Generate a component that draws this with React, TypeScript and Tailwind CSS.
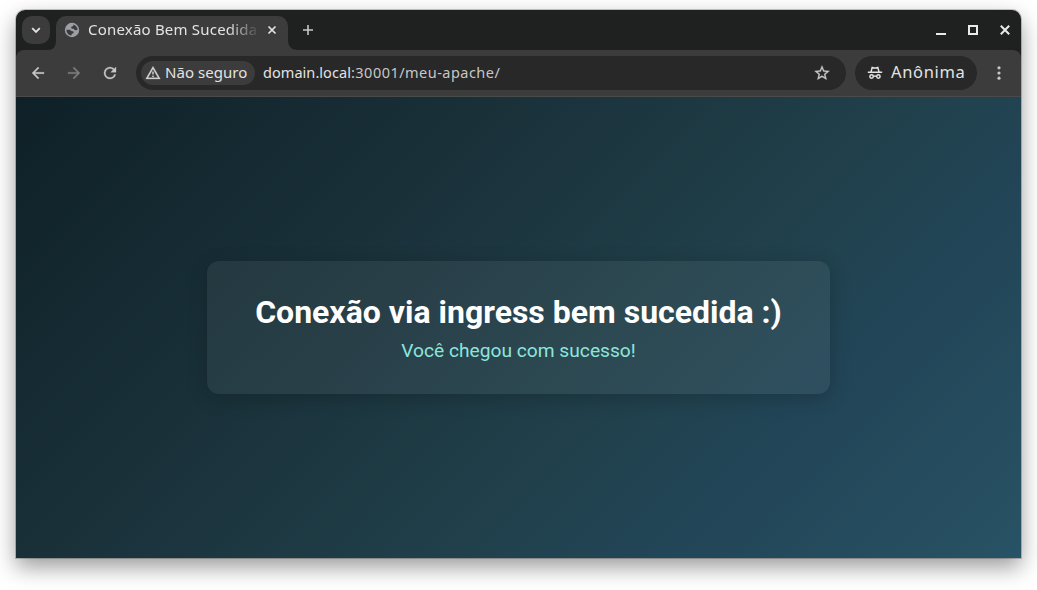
import type { ReactNode } from 'react';

const P = {
  back: 'M20 11H7.83l5.59-5.59L12 4l-8 8 8 8 1.41-1.41L7.83 13H20v-2z',
  forward: 'M12 4l-1.41 1.41L16.17 11H4v2h12.17l-5.58 5.59L12 20l8-8z',
  reload:
    'M17.65 6.35A7.96 7.96 0 0 0 12 4a8 8 0 1 0 7.73 10h-2.08A6 6 0 1 1 12 6c1.66 0 3.14.69 4.22 1.78L13 11h7V4l-2.35 2.35z',
  warning: 'M12 5.99 19.53 19H4.47L12 5.99M12 2 1 21h22L12 2zm1 14h-2v2h2v-2zm0-6h-2v4h2v-4z',
  star: 'M22 9.24l-7.19-.62L12 2 9.19 8.63 2 9.24l5.46 4.73L5.82 21 12 17.27 18.18 21l-1.63-7.03L22 9.24zM12 15.4l-3.76 2.27 1-4.28-3.32-2.88 4.38-.38L12 6.1l1.71 4.04 4.38.38-3.32 2.88 1 4.28L12 15.4z',
};

function Glyph({ d, className }: { d: string; className: string }) {
  return (
    <svg viewBox="0 0 24 24" fill="currentColor" stroke="currentColor" strokeWidth="0.4" className={className}>
      <path d={d} />
    </svg>
  );
}

function WindowButton({ children }: { children: ReactNode }) {
  return (
    <button className="flex size-8 items-center justify-center text-[#e8eaed]">
      <svg viewBox="0 0 10 10" className="size-2.5" fill="none" stroke="currentColor" strokeWidth="2">
        {children}
      </svg>
    </button>
  );
}

function TabStrip() {
  return (
    <div className="flex h-10 bg-[#1f2120]">
      <button className="mt-1.5 ml-1.5 flex h-7 w-7 shrink-0 items-center justify-center rounded-[10px] bg-[#3c3c3c] text-[#e3e3e3]">
        <svg viewBox="0 0 10 10" className="size-2.5" fill="none" stroke="currentColor" strokeWidth="1.8">
          <path d="M1.2 3.2 5 7l3.8-3.8" />
        </svg>
      </button>
      <svg viewBox="0 0 8 10" className="mt-[30px] ml-[-2px] h-2.5 w-2 shrink-0 text-[#3c3c3c]" fill="currentColor">
        <path d="M8 0v10H0C5 10 8 7 8 0z" />
      </svg>
      <div className="mt-1.5 flex h-[34px] w-[232px] shrink-0 items-center rounded-t-[10px] bg-[#3c3c3c] pb-1.5">
        <svg viewBox="0 0 16 16" className="ml-2 size-4 shrink-0">
          <circle cx="8" cy="8" r="7.2" fill="#9aa0a6" />
          <path
            d="M9.3 2.5c2.4.6 4.2 2.8 4.3 5.3l-1.4.5-1.7-.3-.8-1.3H7.9L7 5.6l.9-1.1 1.4-.5z"
            fill="#3c3c3c"
          />
          <path d="M2.4 7.8h3.4l1.6 1.3 2.2.5v1.6l-1.8.6-.4 1.7c-2.8-.1-5-2.7-5-5.7z" fill="#3c3c3c" />
        </svg>
        <span className="mb-0.5 ml-2 w-[169px] overflow-hidden text-[15px] leading-7 tracking-[0.2px] whitespace-nowrap text-[#e3e3e3] [mask-image:linear-gradient(to_right,black_140px,transparent_172px)]">
          Conexão Bem Sucedida
        </span>
        <svg viewBox="0 0 10 10" className="ml-2.5 size-2.5" fill="none" stroke="#e3e3e3" strokeWidth="1.7">
          <path d="m1.5 1.5 7 7m0-7-7 7" />
        </svg>
      </div>
      <svg viewBox="0 0 10 10" className="mt-[30px] size-2.5 shrink-0 text-[#3c3c3c]" fill="currentColor">
        <path d="M0 0v10h10C4 10 0 7 0 0z" />
      </svg>
      <svg viewBox="0 0 10 10" className="mt-[15px] ml-[5px] size-2.5 shrink-0" fill="none" stroke="#c7c7c7" strokeWidth="1.6">
        <path d="M5 0v10M0 5h10" />
      </svg>
      <div className="ml-auto flex h-10 items-center">
        <WindowButton>
          <path d="M0 9h10" />
        </WindowButton>
        <WindowButton>
          <path d="M1 1h8v8H1z" />
        </WindowButton>
        <WindowButton>
          <path d="m.8.8 8.4 8.4m0-8.4L.8 9.2" />
        </WindowButton>
      </div>
    </div>
  );
}

function Toolbar() {
  return (
    <div className="bg-[#1f2120]">
      <div className="flex h-[47px] rounded-t-lg border-b border-[#4a4a4a] bg-[#3c3c3c] pt-1.5 text-[#c7c7c7]">
        <div className="flex h-[34px] w-[120px] items-center pl-[13px]">
          <Glyph d={P.back} className="size-[18px]" />
          <Glyph d={P.forward} className="ml-[18px] size-[18px] text-[#7c7c7c]" />
          <Glyph d={P.reload} className="ml-[18px] size-[18px]" />
        </div>
        <div className="flex h-[34px] w-[710px] items-center rounded-full bg-[#282828] pr-[15px] pl-[5px]">
          <div className="flex h-6 w-[114px] items-center rounded-full bg-[#3c3c3c] pl-1">
            <Glyph d={P.warning} className="size-4 text-[#d3d3d3]" />
            <span className="mb-0.5 ml-1 text-[15px] tracking-[0.05px] whitespace-nowrap text-[#e3e3e3]">
              Não seguro
            </span>
          </div>
          <span className="ml-2 flex text-[14.5px] whitespace-nowrap">
            <span className="w-[88px] tracking-[0.05px] text-[#e3e3e3]">domain.local</span>
            <span className="tracking-[0.47px]">:30001/meu-apache/</span>
          </span>
          <Glyph d={P.star} className="ml-auto size-[18px]" />
        </div>
        <div className="ml-[9px] flex h-[34px] w-[122px] items-center rounded-full bg-[#282828] pl-3 text-[#e3e3e3]">
          <svg viewBox="0 0 16 16" className="size-4" fill="none" stroke="currentColor" strokeWidth="1.5">
            <path d="M.8 7.2h14.4M4 7l1.2-4.6 1.8.5h2l1.8-.5L12 7M6.5 11.3q1.5-.8 3 0" />
            <circle cx="4.6" cy="11.5" r="1.7" />
            <circle cx="11.4" cy="11.5" r="1.7" />
          </svg>
          <span className="mb-0.5 ml-2 text-[16.5px] tracking-[0.65px]">Anônima</span>
        </div>
        <svg viewBox="0 0 4 16" className="mt-[9px] ml-5 h-4 w-1" fill="currentColor">
          <circle cx="2" cy="2.8" r="1.6" />
          <circle cx="2" cy="8" r="1.6" />
          <circle cx="2" cy="13.2" r="1.6" />
        </svg>
      </div>
    </div>
  );
}

export default function App() {
  return (
    <div className="h-[590px] w-[1037px] overflow-hidden bg-white pt-2.5 pl-4 font-['Noto_Sans',sans-serif]">
      <div className="flex h-[548px] w-[1005px] flex-col rounded-t-[9px] shadow-[0_0_0_1px_rgba(0,0,0,0.2),0_9px_22px_rgba(0,0,0,0.4)]">
        <div className="overflow-hidden rounded-t-[9px]">
          <TabStrip />
          <Toolbar />
        </div>
        <main className="flex flex-1 items-center justify-center bg-[linear-gradient(135deg,#0f2027,#1b333c_38%,#1f3d47_55%,#21424f_66%,#224557_75%,#285265)] font-[Roboto,sans-serif]">
          <section className="h-[133px] w-[623px] rounded-xl bg-white/6 pt-8 text-center shadow-[0_4px_20px_rgba(0,0,0,0.2)]">
            <h1 className="text-[32px] leading-[38px] font-bold whitespace-nowrap text-white">
              Conexão via ingress bem sucedida :)
            </h1>
            <p className="mt-2 text-[19.2px] leading-[23px] text-[#8ce6dc]">Você chegou com sucesso!</p>
          </section>
        </main>
      </div>
    </div>
  );
}
